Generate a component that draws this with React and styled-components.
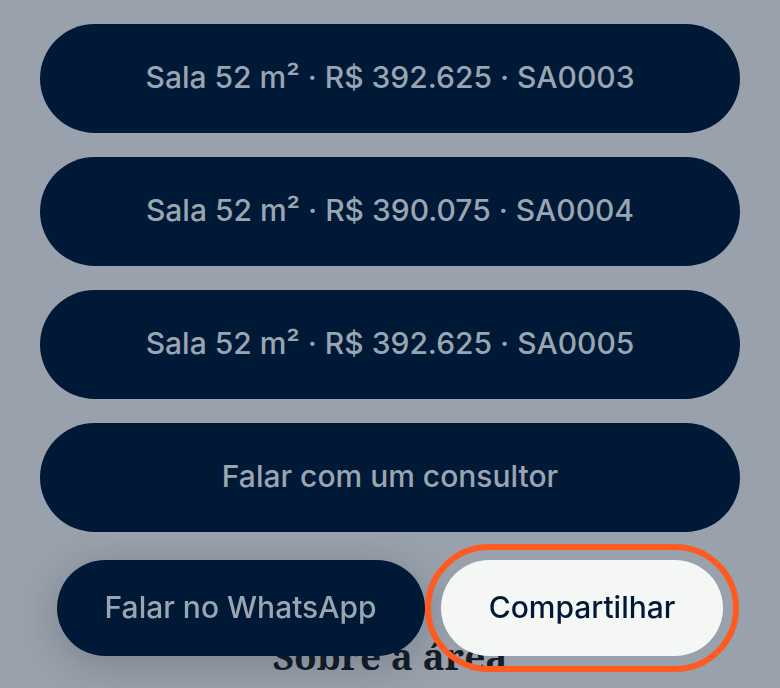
import styled, { createGlobalStyle } from "styled-components";

const GlobalStyle = createGlobalStyle`
  * {
    box-sizing: border-box;
  }

  body {
    margin: 0;
    background-color: #99a1ac;
    font-family: "Inter", "Liberation Sans", sans-serif;
    overflow: hidden;
  }
`;

const Page = styled.main`
  padding: 24px 40px 0;
`;

const LinkList = styled.nav`
  display: flex;
  flex-direction: column;
  gap: 24px;
`;

const LinkButton = styled.a`
  display: flex;
  align-items: center;
  justify-content: center;
  min-height: 109px;
  padding: 0 48px 4px;
  border-radius: 55px;
  background-color: #001936;
  color: #9aa5b2;
  font-size: 30px;
  font-weight: 500;
  line-height: 48px;
  text-decoration: none;
`;

const SectionTitle = styled.h2`
  margin: 100px 0 0;
  color: #131c27;
  font-family: "Noto Serif", "Liberation Serif", serif;
  font-size: 37px;
  font-weight: 700;
  line-height: 48px;
  text-align: center;
`;

const ActionBar = styled.div`
  position: fixed;
  right: 0;
  bottom: 32px;
  left: 0;
  display: flex;
  justify-content: center;
  gap: 16px;
`;

const ActionButton = styled.button`
  min-height: 96px;
  padding: 0 48px 2px;
  border: none;
  border-radius: 48px;
  background-color: ${({ $highlight }) => ($highlight ? "#f5f7f5" : "#001936")};
  color: ${({ $highlight }) => ($highlight ? "#001936" : "#9aa5b2")};
  box-shadow: ${({ $highlight }) =>
    $highlight ? "none" : "0 8px 40px rgba(10, 28, 30, 0.22)"};
  outline: ${({ $highlight }) => ($highlight ? "6px solid #ff5a1f" : "none")};
  outline-offset: 10px;
  font-family: inherit;
  font-size: 30px;
  font-weight: 500;
  line-height: 48px;
  white-space: nowrap;
  cursor: pointer;
`;

const links = [
    { id: "sa0003", label: "Sala 52 m² · R$ 392.625 · SA0003" },
    { id: "sa0004", label: "Sala 52 m² · R$ 390.075 · SA0004" },
    { id: "sa0005", label: "Sala 52 m² · R$ 392.625 · SA0005" },
    { id: "consultor", label: "Falar com um consultor" },
];

const App = () => {
    return (
        <>
            <GlobalStyle />
            <Page>
                <LinkList>
                    {links.map((link) => (
                        <LinkButton key={link.id} href={`#${link.id}`}>
                            {link.label}
                        </LinkButton>
                    ))}
                </LinkList>
                <SectionTitle>Sobre a área</SectionTitle>
            </Page>
            <ActionBar>
                <ActionButton type="button">Falar no WhatsApp</ActionButton>
                <ActionButton type="button" $highlight>
                    Compartilhar
                </ActionButton>
            </ActionBar>
        </>
    );
};

export default App;
